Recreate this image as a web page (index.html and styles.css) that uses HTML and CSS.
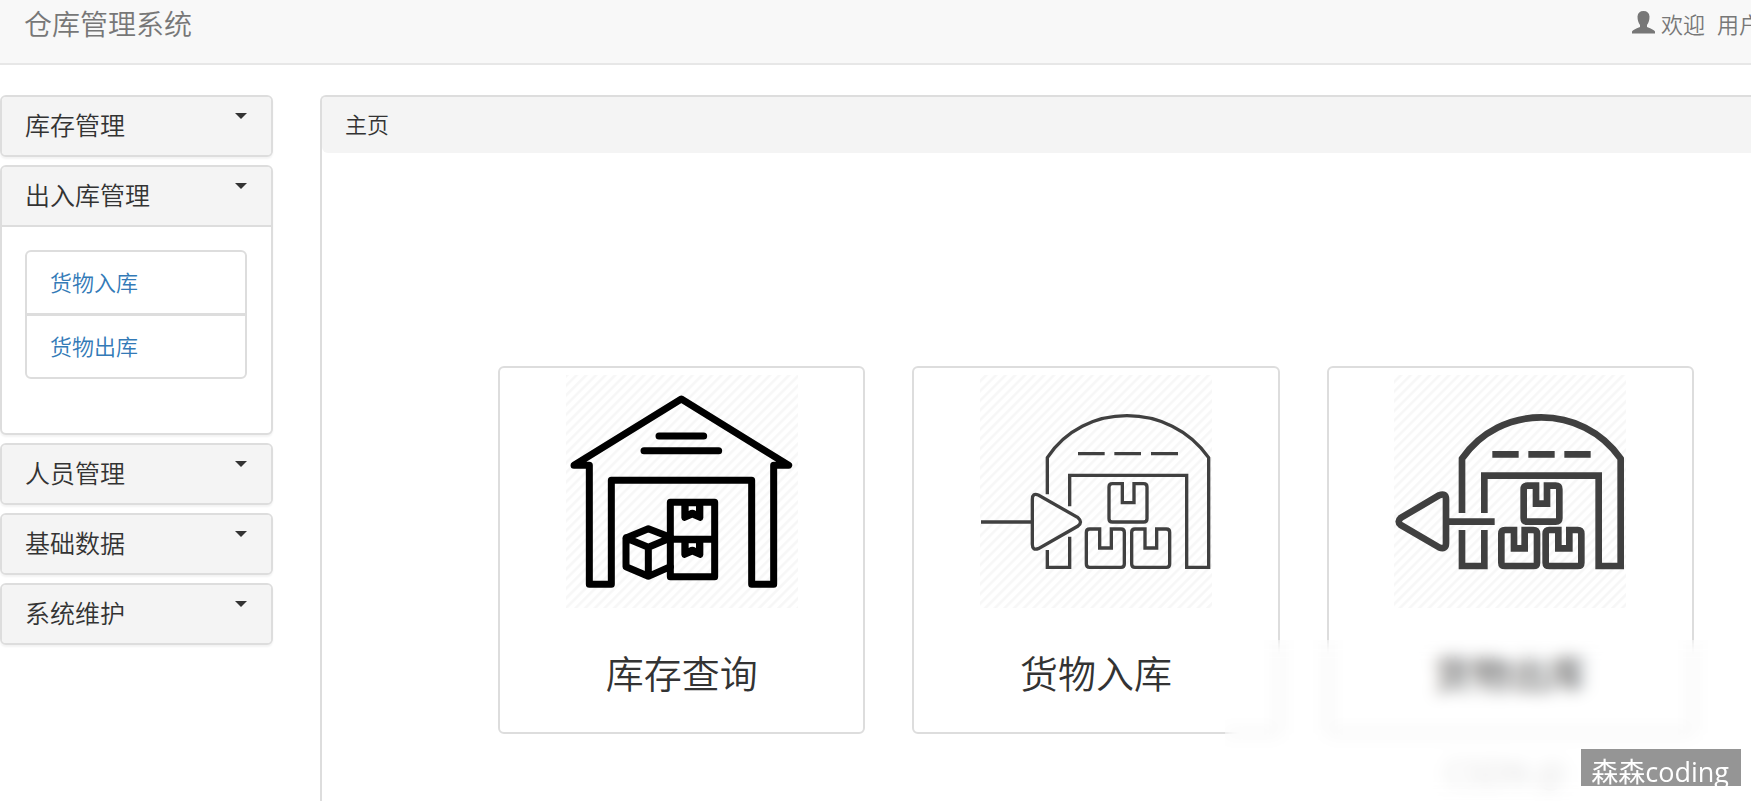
FILE: index.html
```html
<!DOCTYPE html>
<html lang="zh-CN">
<head>
<meta charset="utf-8">
<title>仓库管理系统</title>
<link rel="stylesheet" href="styles.css">
</head>
<body>
<header class="navbar">
  <a class="brand" href="#">仓库管理系统</a>
  <div class="user">
    <svg class="user-icon" viewBox="0 0 23 23" aria-hidden="true"><path d="M0 22.500V20.500Q1 18.500 8 16V14Q5.500 11 5.500 5.500Q6 0 11.500 0Q17 0 17.500 5.500Q17.500 11 15 14V16Q22 18.500 23 20.500V22.500Z"/></svg>
    <span>欢迎</span>
    <span class="user-name">用户</span>
  </div>
</header>

<div class="layout">
  <nav class="sidebar">
    <section class="panel">
      <button class="panel-head" type="button"><span>库存管理</span><i class="caret"></i></button>
    </section>
    <section class="panel">
      <button class="panel-head open" type="button" aria-expanded="true"><span>出入库管理</span><i class="caret"></i></button>
      <div class="panel-body">
        <ul class="links">
          <li><a href="#">货物入库</a></li>
          <li><a href="#">货物出库</a></li>
        </ul>
      </div>
    </section>
    <section class="panel">
      <button class="panel-head" type="button"><span>人员管理</span><i class="caret"></i></button>
    </section>
    <section class="panel">
      <button class="panel-head" type="button"><span>基础数据</span><i class="caret"></i></button>
    </section>
    <section class="panel">
      <button class="panel-head" type="button"><span>系统维护</span><i class="caret"></i></button>
    </section>
  </nav>

  <main class="main">
    <h1 class="main-head">主页</h1>
    <div class="cards">
      <a class="card" href="#">
        <svg class="art" viewBox="224 42 702 702" aria-hidden="true">
          <defs>
            <pattern id="hatch" width="20.500" height="20.500" patternUnits="userSpaceOnUse" patternTransform="rotate(45)"><path d="M10 0V20.500" stroke="#f6f6f6" stroke-width="7"/></pattern>
          </defs>
          <rect x="227" y="45" width="696" height="699" fill="url(#hatch)"/>
          <g fill="none" stroke="#000" stroke-width="21" stroke-linejoin="round" stroke-linecap="round">
            <path d="M297 316H251L573 117L895 316H850V673H784V361H363V673H297Z"/>
            <path d="M506 228H640M461 272H685"/>
            <path d="M540 427H673V650H540ZM540 538H673"/>
            <path d="M540 532L474 506L407 534V620L474 649L540 620M407 534L474 562L540 534M474 562V649"/>
          </g>
          <path d="M573 435H639V474Q637 485 627 482L606 473L585 482Q575 485 573 474ZM573 546H639V585Q637 596 627 593L606 584L585 593Q575 596 573 585Z"/>
          <path d="M595 439H617V453Q606 446 595 453ZM595 550H617V564Q606 557 595 564Z" fill="#fff"/>
        </svg>
        <h2>库存查询</h2>
      </a>
      <a class="card" href="#">
        <svg class="art" viewBox="237 42 702 702" aria-hidden="true">
          <rect x="240" y="45" width="696" height="699" fill="url(#hatch)"/>
          <g fill="none" stroke="#404040" stroke-width="10">
            <path d="M442 403V293C550 125 810 125 926 293V622H860V346H509V439M509 530V622H442V570"/>
            <path d="M534 281H614M643 281H723M753 281H834M243 486H397"/>
            <path d="M397 418Q397 398 415 405L534 473Q549 486 534 498L415 566Q397 572 397 553Z"/>
            <path d="M667 371H637Q627 371 627 381V476Q627 486 637 486H731Q741 486 741 476V381Q741 371 731 371H702V428H667Z"/>
            <path d="M599 507H569Q559 507 559 517V612Q559 622 569 622H663Q673 622 673 612V517Q673 507 663 507H634V564H599Z"/>
            <path d="M735 507H705Q695 507 695 517V612Q695 622 705 622H799Q809 622 809 612V517Q809 507 799 507H770V564H735Z"/>
          </g>
        </svg>
        <h2>货物入库</h2>
      </a>
      <a class="card" href="#">
        <svg class="art" viewBox="235 42 702 702" aria-hidden="true">
          <rect x="238" y="45" width="696" height="699" fill="url(#hatch)"/>
          <g fill="none" stroke="#404040" stroke-width="20">
            <path d="M442 459V296C555 131 804 131 918 296V618H852V347H509V459M509 510V618H442V510"/>
            <path d="M533 283H612M641 283H720M749 283H828M394 485H540"/>
            <path d="M394 418Q394 398 373 406L258 474Q246 485 258 495L373 562Q394 570 394 550Z"/>
            <path d="M664 377H638Q627 377 627 388V475Q627 485 638 485H723Q734 485 734 475V388Q734 377 723 377H697V431H664Z"/>
            <path d="M598 510H571Q560 510 560 521V608Q560 618 571 618H656Q667 618 667 608V521Q667 510 656 510H630V565H598Z"/>
            <path d="M731 510H704Q693 510 693 521V608Q693 618 704 618H789Q800 618 800 608V521Q800 510 789 510H764V565H731Z"/>
          </g>
        </svg>
        <h2>货物出库</h2>
      </a>
    </div>
  </main>
</div>

<div class="ghost">CSDN @</div>
<div class="frost"></div>
<div class="watermark">森森coding</div>
</body>
</html>
```
FILE: styles.css
```css
* {
  box-sizing: border-box;
}

body {
  position: relative;
  display: flex;
  flex-direction: column;
  min-height: 100vh;
  margin: 0;
  overflow: hidden;
  background: #fff;
  color: #333;
  font-family: "Noto Sans CJK SC", "Open Sans", sans-serif;
  font-size: 22px;
  font-weight: 350;
  line-height: 32px;
}

a {
  color: inherit;
  text-decoration: none;
}

.navbar {
  display: flex;
  justify-content: space-between;
  height: 65px;
  padding: 7px 0 0 24px;
  overflow: hidden;
  border-bottom: 2px solid #e7e7e7;
  background: #f8f8f8;
  color: #777;
}

.brand {
  font-size: 28px;
}

.user {
  display: flex;
  gap: 6px;
  margin-right: -10px;
}

.user-icon {
  width: 23px;
  height: 23px;
  margin-top: 4px;
  fill: #777;
}

.user-name {
  margin-left: 6px;
}

.layout {
  display: flex;
  flex: 1;
  gap: 47px;
  padding-top: 30px;
}

.sidebar {
  display: flex;
  flex: none;
  flex-direction: column;
  gap: 8px;
  width: 273px;
}

.panel {
  border: 2px solid #ddd;
  border-radius: 6px;
  background: #fff;
  box-shadow: 0 2px 2px rgba(0, 0, 0, 0.05);
}

.panel-head {
  display: flex;
  justify-content: space-between;
  width: 100%;
  padding: 11px 24px 15px 23px;
  border: 0;
  border-radius: 4px;
  background: #f4f4f4;
  color: #333;
  font: inherit;
  font-size: 25px;
  text-align: left;
}

.panel-head.open {
  border-bottom: 2px solid #ddd;
  border-radius: 4px 4px 0 0;
}

.caret {
  margin-top: 5px;
  border: 6px solid transparent;
  border-top-color: #333;
  border-bottom: 0;
  align-self: flex-start;
}

.panel-body {
  padding: 23px 24px 54px 23px;
}

.links {
  margin: 0;
  padding: 0;
  border: 2px solid #ddd;
  border-radius: 6px;
  list-style: none;
}

.links li + li {
  border-top: 3px solid #ddd;
}

.links a {
  display: block;
  padding: 13px 23px 16px;
  color: #337ab7;
}

.main {
  flex: 1;
  border: solid #ddd;
  border-width: 2px 0 0 2px;
  border-radius: 6px 0 0 0;
}

.main-head {
  margin: 0;
  padding: 10px 23px 14px;
  border-radius: 4px 0 0 6px;
  background: #f4f4f4;
  font-size: 22px;
  font-weight: 350;
}

.cards {
  display: grid;
  grid-template-columns: repeat(3, 1fr);
  gap: 47px;
  padding: 213px 57px 24px 176px;
}

.card {
  display: flex;
  flex-direction: column;
  align-items: center;
  padding: 6px 6px 36px;
  border: 2px solid #ddd;
  border-radius: 6px;
}

.art {
  width: 234px;
  height: 234px;
}

.card h2 {
  margin: 40px 0 0;
  font-size: 38px;
  font-weight: 350;
  line-height: 48px;
}

.ghost {
  position: absolute;
  right: 185px;
  bottom: 14px;
  color: #e0e0e0;
  font-size: 32px;
}

.frost {
  position: absolute;
  right: 0;
  bottom: 0;
  width: 526px;
  height: 161px;
  backdrop-filter: blur(8px);
}

.watermark {
  position: absolute;
  right: 10px;
  bottom: 15px;
  height: 37px;
  padding: 7px 12px 0 10px;
  background: #959595;
  color: #fff;
  font-family: "Open Sans", "Noto Sans CJK SC", sans-serif;
  font-size: 27px;
  font-weight: 400;
}
```
